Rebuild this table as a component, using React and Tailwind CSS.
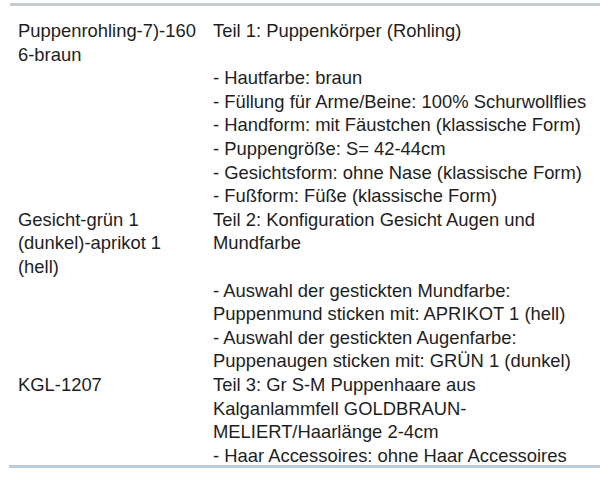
const rows = [
  {
    left: ["Puppenrohling-7)-160", "6-braun"],
    right: [
      "Teil 1: Puppenkörper (Rohling)",
      "",
      "- Hautfarbe: braun",
      "- Füllung für Arme/Beine: 100% Schurwollflies",
      "- Handform: mit Fäustchen (klassische Form)",
      "- Puppengröße: S= 42-44cm",
      "- Gesichtsform: ohne Nase (klassische Form)",
      "- Fußform: Füße (klassische Form)",
    ],
  },
  {
    left: ["Gesicht-grün 1", "(dunkel)-aprikot 1", "(hell)"],
    right: [
      "Teil 2: Konfiguration Gesicht Augen und",
      "Mundfarbe",
      "",
      "- Auswahl der gestickten Mundfarbe:",
      "Puppenmund sticken mit: APRIKOT 1 (hell)",
      "- Auswahl der gestickten Augenfarbe:",
      "Puppenaugen sticken mit: GRÜN 1 (dunkel)",
    ],
  },
  {
    left: ["KGL-1207"],
    right: [
      "Teil 3: Gr S-M Puppenhaare aus",
      "Kalganlammfell GOLDBRAUN-",
      "MELIERT/Haarlänge 2-4cm",
      "- Haar Accessoires: ohne Haar Accessoires",
    ],
  },
];

const Lines = ({ lines }) => (
  <div>
    {lines.map((l, i) => (
      <div key={i} className="h-[23.6px] whitespace-nowrap">
        {l}
      </div>
    ))}
  </div>
);

const App = () => {
  return (
    <div className="w-[600px] h-[482px] bg-white pl-[10px] pt-[3px] font-['Liberation_Sans',Arial,sans-serif] text-[18.4px] leading-[23.6px] text-[#1e1e1e] overflow-hidden">
      <div className="h-[3px] bg-[#c4ccd4]" />
      <div className="pl-[8px] pt-[13px]">
        {rows.map((row, i) => (
          <div key={i} className="grid grid-cols-[195px_1fr]">
            <Lines lines={row.left} />
            <Lines lines={row.right} />
          </div>
        ))}
      </div>
      <div className="h-[3px] mt-[-2px] -ml-px bg-[#b7cee0]" />
    </div>
  );
};

export default App;
